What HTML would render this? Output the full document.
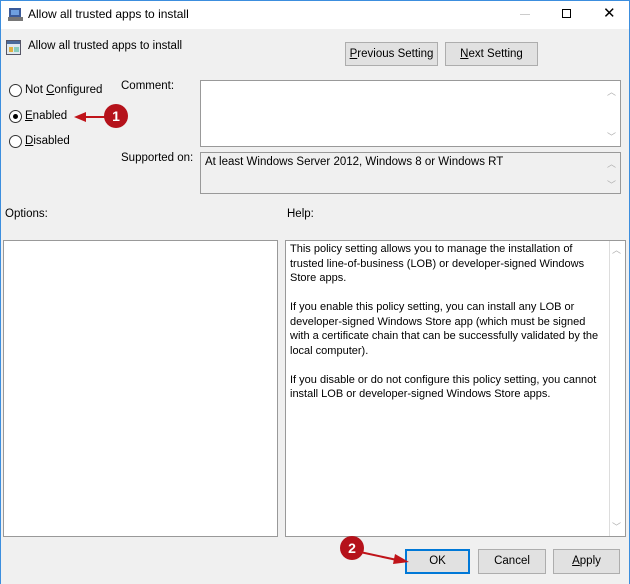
<!DOCTYPE html>
<html><head><style>
*{box-sizing:border-box}
body{margin:0;width:630px;height:584px;overflow:hidden;background:#f0f0f0;font-family:"Liberation Sans",sans-serif;font-size:11px;color:#000;position:relative}
.a{position:absolute}
.win{position:absolute;left:0;top:0;width:630px;height:584px;border:1px solid #3c8ede;border-bottom:none}
.tb{left:1px;top:0;width:628px;height:29px;background:#fff}
.btn{position:absolute;background:#e1e1e1;border:1px solid #adadad;text-align:center;line-height:22px;font-size:11.5px}
.box{position:absolute;background:#fff;border:1px solid #7a7a7a}
.sb{position:absolute;color:#b0b0b0;font-size:9px}
.rad{position:absolute;width:13px;height:13px;border:1px solid #333;border-radius:50%;background:#fff}
.lbl{position:absolute;font-size:11.5px}
u{text-decoration:underline}
</style></head><body>
<div class="a tb"></div>
<div class="win"></div>
<svg class="a" style="left:8px;top:7px" width="16" height="15"><rect x="1" y="1" width="12" height="9" fill="#3a5a9a"/><rect x="3" y="3" width="8" height="5" fill="#6fa0e0"/><rect x="0" y="10" width="15" height="4" fill="#777"/></svg>
<div class="lbl" style="left:28px;top:7px;font-size:12px">Allow all trusted apps to install</div>
<div class="a" style="left:520px;top:14px;width:10px;height:1px;background:#ccc"></div>
<div class="a" style="left:562px;top:9px;width:9px;height:9px;border:1px solid #000"></div>
<div class="lbl" style="left:603px;top:4px;font-size:15px">✕</div>
<svg class="a" style="left:6px;top:40px" width="16" height="16"><rect x="0.5" y="0.5" width="14" height="14" fill="#dfe8ee" stroke="#556"/><rect x="1" y="1" width="13" height="3" fill="#4a6a9a"/><rect x="3" y="7" width="4" height="5" fill="#e0b040"/><rect x="8" y="7" width="5" height="5" fill="#8cb"/></svg>
<div class="lbl" style="left:28px;top:40px">Allow all trusted apps to install</div>
<div class="btn" style="left:345px;top:42px;width:93px;height:24px"><u>P</u>revious Setting</div>
<div class="btn" style="left:445px;top:42px;width:93px;height:24px"><u>N</u>ext Setting</div>
<div class="rad" style="left:9px;top:84px"></div>
<div class="lbl" style="left:25px;top:84px">Not <u>C</u>onfigured</div>
<div class="rad" style="left:9px;top:110px"><div class="a" style="left:3px;top:3px;width:5px;height:5px;border-radius:50%;background:#000"></div></div>
<div class="lbl" style="left:25px;top:110px"><u>E</u>nabled</div>
<div class="rad" style="left:9px;top:135px"></div>
<div class="lbl" style="left:25px;top:135px"><u>D</u>isabled</div>
<svg class="a" style="left:70px;top:100px" width="70" height="30"><line x1="12" y1="17" x2="40" y2="17" stroke="#c0141a" stroke-width="2"/><polygon points="4,17 16,12 16,22" fill="#c0141a"/><circle cx="46" cy="16" r="12" fill="#b5121b"/><text x="46" y="21" font-family="Liberation Sans" font-size="14" fill="#fff" text-anchor="middle" font-weight="bold">1</text></svg>
<div class="lbl" style="left:121px;top:80px">Comment:</div>
<div class="box" style="left:200px;top:80px;width:421px;height:67px;border-color:#999"></div>
<div class="sb" style="left:607px;top:85px">︿</div><div class="sb" style="left:607px;top:130px">﹀</div>
<div class="lbl" style="left:121px;top:152px">Supported on:</div>
<div class="a" style="left:200px;top:152px;width:421px;height:42px;border:1px solid #999;background:#f0f0f0"></div>
<div class="lbl" style="left:205px;top:156px">At least Windows Server 2012, Windows 8 or Windows RT</div>
<div class="sb" style="left:607px;top:157px">︿</div><div class="sb" style="left:607px;top:178px">﹀</div>
<div class="lbl" style="left:5px;top:208px">Options:</div>
<div class="lbl" style="left:287px;top:208px">Help:</div>
<div class="box" style="left:3px;top:240px;width:275px;height:297px;border-color:#999"></div>
<div class="box" style="left:285px;top:240px;width:341px;height:297px;border-color:#999"></div>
<div class="a" style="left:609px;top:241px;width:1px;height:295px;background:#ddd"></div>
<div class="sb" style="left:612px;top:243px">︿</div><div class="sb" style="left:612px;top:520px">﹀</div>
<div class="lbl" style="left:290px;top:242px;width:312px;line-height:14.5px;font-size:11px">This policy setting allows you to manage the installation of trusted line-of-business (LOB) or developer-signed Windows Store apps.<br><br>If you enable this policy setting, you can install any LOB or developer-signed Windows Store app (which must be signed with a certificate chain that can be successfully validated by the local computer).<br><br>If you disable or do not configure this policy setting, you cannot install LOB or developer-signed Windows Store apps.</div>
<div class="btn" style="left:405px;top:549px;width:65px;height:25px;border:2px solid #0078d7;line-height:21px">OK</div>
<div class="btn" style="left:478px;top:549px;width:68px;height:25px">Cancel</div>
<div class="btn" style="left:553px;top:549px;width:67px;height:25px"><u>A</u>pply</div>
<svg class="a" style="left:335px;top:533px" width="80" height="35"><circle cx="17" cy="15" r="12" fill="#b5121b"/><text x="17" y="20" font-family="Liberation Sans" font-size="14" fill="#fff" text-anchor="middle" font-weight="bold">2</text><line x1="25" y1="19" x2="62" y2="27" stroke="#c0141a" stroke-width="2"/><polygon points="74,29 60,21 58,31" fill="#c0141a"/></svg>
</body></html>
